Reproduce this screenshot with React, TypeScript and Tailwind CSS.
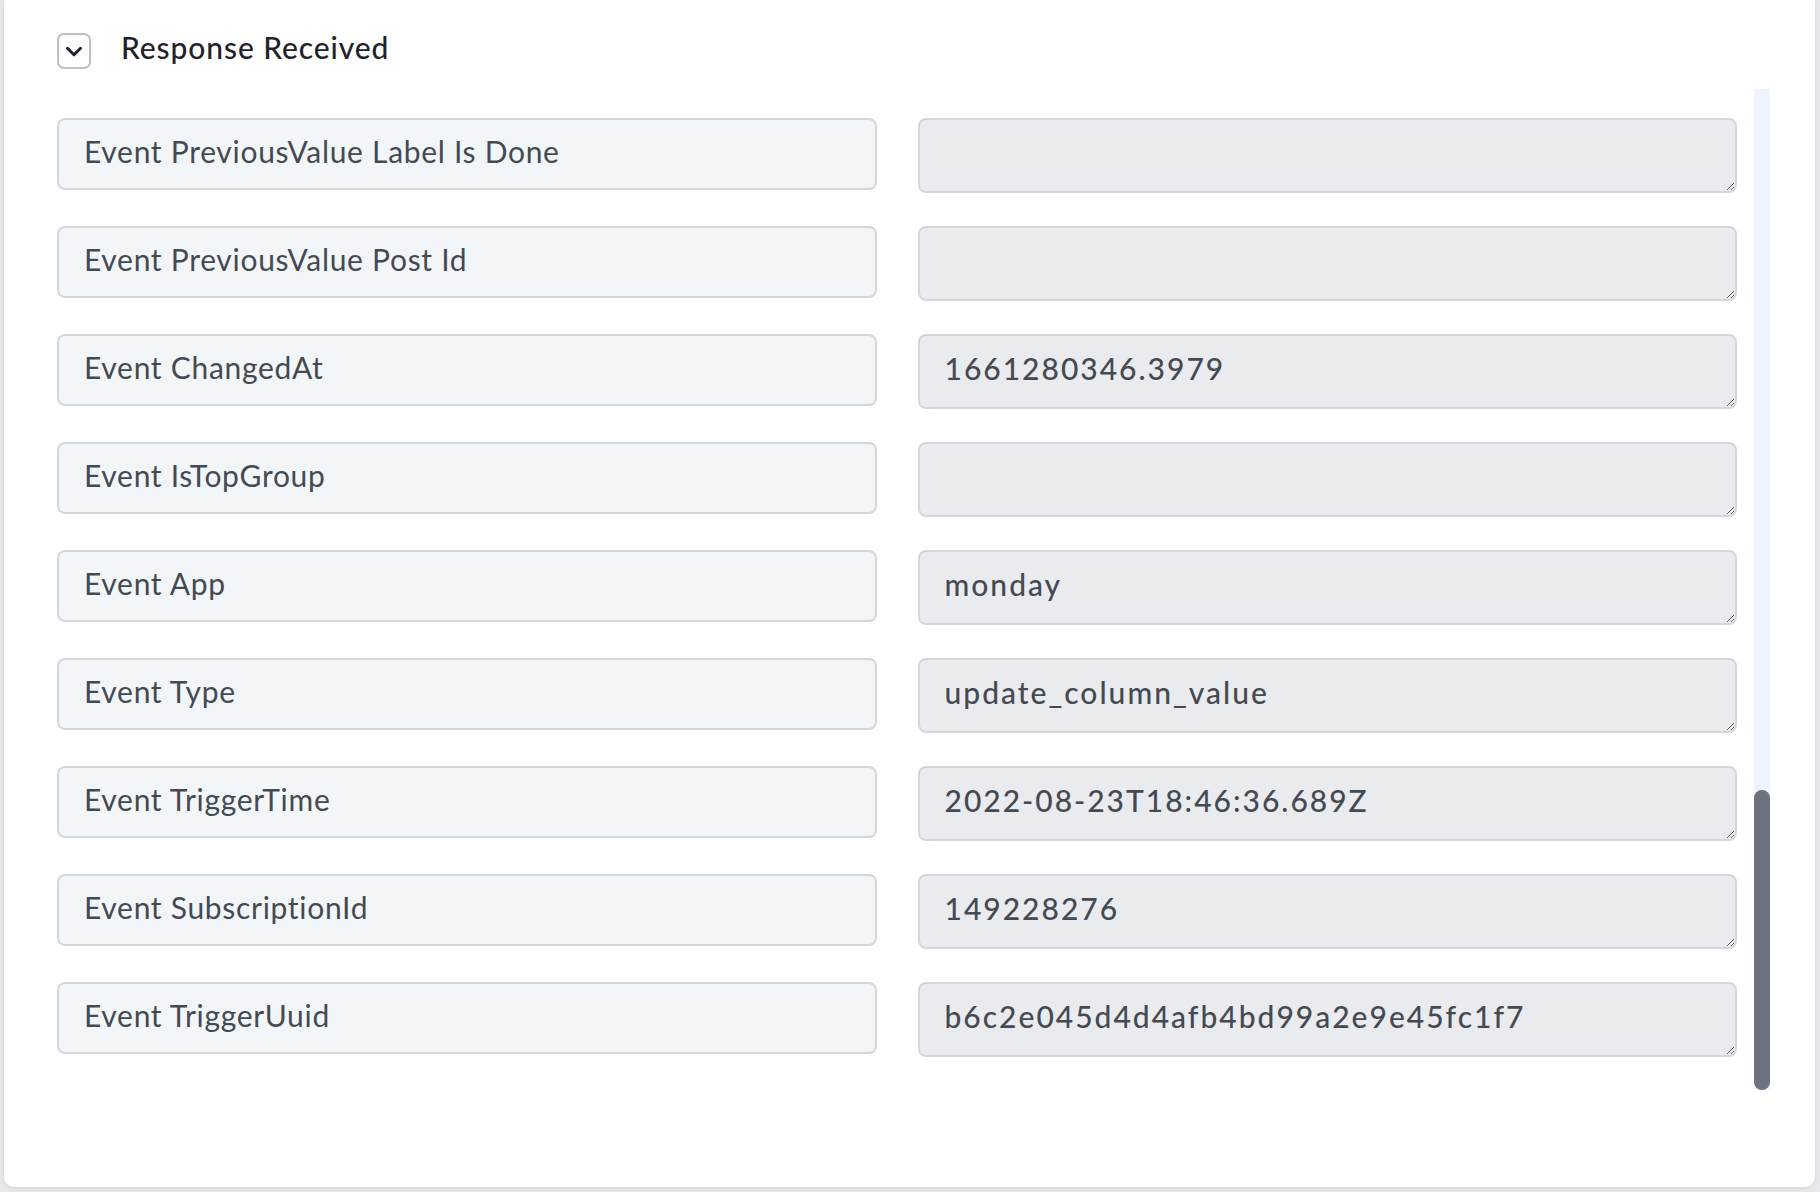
import React from 'react';

const rows: { label: string; value: string }[] = [
  { label: 'Event PreviousValue Label Is Done', value: '' },
  { label: 'Event PreviousValue Post Id', value: '' },
  { label: 'Event ChangedAt', value: '1661280346.3979' },
  { label: 'Event IsTopGroup', value: '' },
  { label: 'Event App', value: 'monday' },
  { label: 'Event Type', value: 'update_column_value' },
  { label: 'Event TriggerTime', value: '2022-08-23T18:46:36.689Z' },
  { label: 'Event SubscriptionId', value: '149228276' },
  { label: 'Event TriggerUuid', value: 'b6c2e045d4d4afb4bd99a2e9e45fc1f7' },
];

const font = { fontFamily: 'Lato, "Noto Sans", sans-serif' };

export default function App() {
  return (
    <div className="h-[1192px] w-[1820px] overflow-hidden bg-[#e6e8eb]" style={font}>
      <div className="ml-[4px] h-[1187px] w-[1811px] rounded-b-[10px] bg-white shadow-[0_1px_4px_rgba(0,0,0,0.08)]">
        {/* Header */}
        <div className="flex h-[69px] items-end pl-[53px]">
          <div className="flex h-[36px] items-center gap-[30px]">
            <button className="flex h-[36px] w-[34px] items-center justify-center rounded-[7px] border-2 border-[#bcc0c7] bg-white">
              <svg width="26" height="26" viewBox="0 0 24 24" fill="none" stroke="#1f2329" strokeWidth="2.8" strokeLinecap="round" strokeLinejoin="round">
                <path d="M6 9.5l6 6 6-6" />
              </svg>
            </button>
            <h2 className="mb-[8px] text-[30px] font-medium leading-none tracking-[0.9px] text-[#1f2329]">Response Received</h2>
          </div>
        </div>

        {/* Fields + scrollbar */}
        <div className="mt-[20px] flex h-[1001px]">
          <div className="grid flex-1 grid-cols-2 content-start items-start gap-x-[41px] gap-y-[33px] pb-[33px] pl-[53px] pt-[29px]">
            {rows.map((r) => (
              <React.Fragment key={r.label}>
                <div className="flex h-[72px] items-center rounded-[8px] border-2 border-[#d3d7dc] bg-[#f3f6f9] px-[25px] pb-[5px] text-[30px] tracking-[0.7px] text-[#454a52]">
                  {r.label}
                </div>
                <textarea
                  readOnly
                  value={r.value}
                  rows={1}
                  className="block h-[75px] w-full resize-y rounded-[8px] border-2 border-[#d3d7dc] bg-[#eaebef] px-[25px] pb-[12px] pt-[11px] text-[30px] font-medium leading-[42px] tracking-[2px] text-[#454a52] outline-none"
                  style={font}
                />
              </React.Fragment>
            ))}
          </div>
          <div className="ml-[17px] mr-[45px] flex w-[16px] flex-col justify-end bg-[#eef5fe]">
            <div className="h-[300px] w-full rounded-full bg-[#6b7280]" />
          </div>
        </div>
      </div>
    </div>
  );
}
